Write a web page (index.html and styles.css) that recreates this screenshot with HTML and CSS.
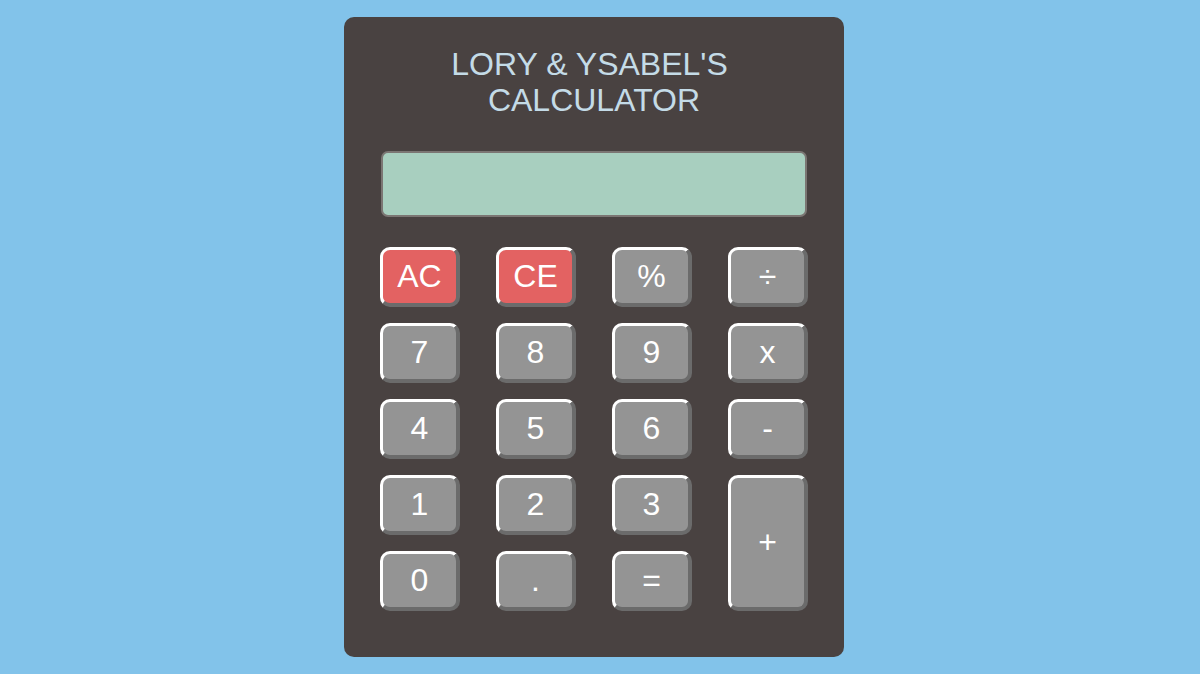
FILE: index.html
```html
<!DOCTYPE html>
<html lang="en">
<head>
<meta charset="utf-8">
<title>Lory &amp; Ysabel's Calculator</title>
<link rel="stylesheet" href="styles.css">
</head>
<body>
<main class="calculator">
  <h1 class="title">LORY &amp; YSABEL'S&nbsp;<br>CALCULATOR</h1>
  <div class="display"></div>
  <div class="keys">
    <button class="key key-red">AC</button>
    <button class="key key-red">CE</button>
    <button class="key">%</button>
    <button class="key">÷</button>
    <button class="key">7</button>
    <button class="key">8</button>
    <button class="key">9</button>
    <button class="key">x</button>
    <button class="key">4</button>
    <button class="key">5</button>
    <button class="key">6</button>
    <button class="key">-</button>
    <button class="key">1</button>
    <button class="key">2</button>
    <button class="key">3</button>
    <button class="key key-tall">+</button>
    <button class="key">0</button>
    <button class="key">.</button>
    <button class="key">=</button>
  </div>
</main>
</body>
</html>
```

FILE: styles.css
```css
html, body {
  margin: 0;
  padding: 0;
}
body {
  background: #82c3ea;
  min-height: 674px;
  display: flex;
  justify-content: center;
  align-items: flex-start;
  padding: 17px 12px 0 0;
  box-sizing: border-box;
  font-family: "Liberation Sans", Arial, sans-serif;
}
.calculator {
  width: 500px;
  height: 640px;
  box-sizing: border-box;
  background: #494241;
  border-radius: 10px;
  padding: 29px 36px 0;
  display: flex;
  flex-direction: column;
}
.title {
  margin: 0;
  font-weight: normal;
  font-size: 32px;
  line-height: 36px;
  color: #c4dbe7;
  text-align: center;
}
.display {
  margin: 33px 1px 0;
  height: 66px;
  box-sizing: border-box;
  background: #a8cfbf;
  border: 2px solid #7b7673;
  border-radius: 7px;
}
.keys {
  margin-top: 30px;
  display: grid;
  grid-template-columns: repeat(4, 80px);
  grid-auto-rows: 60px;
  column-gap: 36px;
  row-gap: 16px;
}
.key {
  margin: 0;
  padding: 0;
  box-sizing: border-box;
  background: #949494;
  color: #ffffff;
  font-family: "Liberation Sans", Arial, sans-serif;
  font-size: 32px;
  border-style: solid;
  border-width: 3px 4px 4px 3px;
  border-color: #ffffff #6b6b6b #6b6b6b #ffffff;
  border-radius: 10px;
  display: flex;
  align-items: center;
  justify-content: center;
}
.key-red {
  background: #e36262;
}
.key-tall {
  grid-column: 4;
  grid-row: 4 / span 2;
}
```
